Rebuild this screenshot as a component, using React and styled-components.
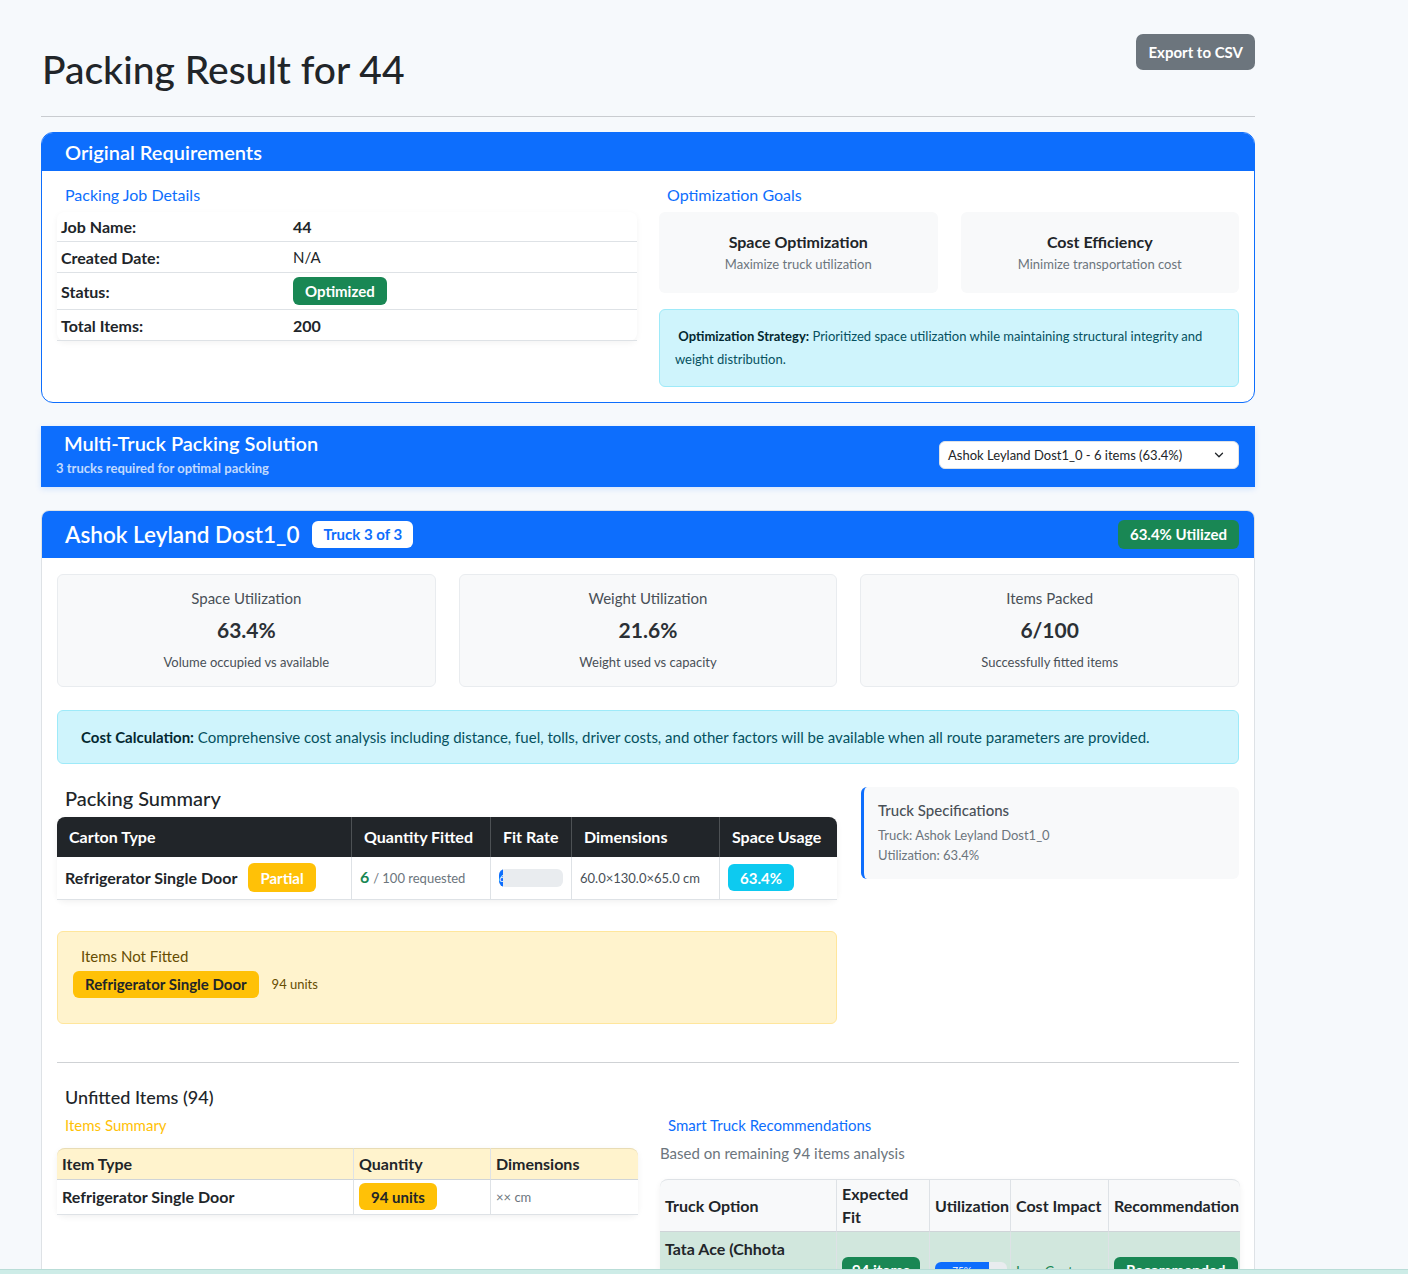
import styled, { createGlobalStyle } from "styled-components";
import { ChevronDown } from "lucide-react";

const GlobalStyle = createGlobalStyle`
  body {
    margin: 0;
    background: #f6f9fc;
    font-family: Lato, "Noto Sans", sans-serif;
    color: #212529;
  }
  * { box-sizing: border-box; }
`;

const Page = styled.div`
  width: 1214px;
  margin-left: 41px;
  padding-top: 34px;
  padding-bottom: 60px;
`;

const Header = styled.div`
  display: flex;
  justify-content: space-between;
  align-items: flex-start;
  border-bottom: 1px solid #c9ccd0;
  padding-bottom: 23px;
`;

const Title = styled.h1`
  margin: 12px 0 0 1px;
  font-size: 39px;
  font-weight: 500;
  line-height: 1.2;
`;

const ExportButton = styled.button`
  background: #6c757d;
  color: #fff;
  border: none;
  border-radius: 7px;
  height: 36px;
  padding: 0 12px;
  font-family: inherit;
  font-size: 15px;
  font-weight: 700;
`;

const Card = styled.div`
  margin-top: ${(p) => p.$mt || 0}px;
  background: #fff;
  border: 1px solid ${(p) => p.$border || "#dee2e6"};
  border-radius: ${(p) => p.$radius || 8}px;
  overflow: hidden;
`;

const CardHeader = styled.div`
  background: #0d6efd;
  color: #fff;
  padding: 0 15px 0 23px;
  height: ${(p) => p.$h}px;
  display: flex;
  align-items: center;
  justify-content: space-between;
`;

const HeaderTitle = styled.div`
  font-size: ${(p) => p.$size || 20}px;
  font-weight: 600;
`;

const CardBody = styled.div`
  padding: 15px;
`;

const TwoCols = styled.div`
  display: grid;
  grid-template-columns: 1fr 1fr;
  column-gap: 22px;
`;

const SectionLabel = styled.div`
  color: ${(p) => p.$color || "#0d6efd"};
  font-size: ${(p) => p.$size || 15}px;
  padding-left: 8px;
  margin: ${(p) => p.$m || "0"};
  line-height: 18px;
`;

const DetailTable = styled.table`
  width: 100%;
  border-collapse: collapse;
  font-size: 15px;
  border-radius: 8px;
  box-shadow: 0 2px 6px rgba(0, 0, 0, 0.05);
  td {
    padding: 0 4px;
    border-bottom: 1px solid #dee2e6;
  }
  td:first-child {
    width: 232px;
    font-weight: 700;
    font-size: 16px;
  }
`;

const DetailRow = styled.tr`
  height: ${(p) => p.$h}px;
`;

const Value = styled.span`
  font-weight: ${(p) => (p.$bold ? 700 : 400)};
  font-size: ${(p) => (p.$bold ? 16 : 15)}px;
`;

const Badge = styled.span`
  display: inline-flex;
  align-items: center;
  height: ${(p) => p.$h || 27}px;
  padding: 0 ${(p) => p.$px || 12}px;
  background: ${(p) => p.$bg};
  color: ${(p) => p.$fg || "#fff"};
  font-size: 15px;
  font-weight: 700;
  border-radius: 6px;
  white-space: nowrap;
`;

const GoalGrid = styled.div`
  display: grid;
  grid-template-columns: 1fr 1fr;
  gap: 23px;
  margin-top: 8px;
`;

const GoalBox = styled.div`
  background: #f8f9fa;
  border-radius: 6px;
  height: 81px;
  display: flex;
  flex-direction: column;
  align-items: center;
  justify-content: center;
  gap: 5px;
`;

const GoalTitle = styled.div`
  font-size: 16px;
  font-weight: 700;
`;

const GoalText = styled.div`
  font-size: 13px;
  color: #6c757d;
`;

const InfoAlert = styled.div`
  margin-top: ${(p) => p.$mt || 0}px;
  background: #cff4fc;
  border: 1px solid #9eeaf9;
  color: #055160;
  border-radius: 6px;
  padding: ${(p) => p.$pad};
  font-size: ${(p) => p.$size}px;
  line-height: ${(p) => p.$lh}px;
  strong {
    color: #032830;
  }
`;

const SolutionBar = styled.div`
  margin-top: 23px;
  background: #0d6efd;
  height: 61px;
  display: flex;
  align-items: center;
  justify-content: space-between;
  padding: 0 16px 0 15px;
  box-shadow: 0 2px 6px rgba(13, 110, 253, 0.15);
`;

const SolutionText = styled.div`
  color: #fff;
  display: flex;
  flex-direction: column;
  gap: 4px;
  align-self: flex-start;
  padding-top: 5px;
`;

const SolutionTitle = styled.div`
  font-size: 20px;
  font-weight: 600;
  line-height: 24px;
  padding-left: 8px;
`;

const SolutionSub = styled.div`
  font-size: 13px;
  font-weight: 700;
  line-height: 18px;
  color: rgba(255, 255, 255, 0.75);
`;

const SelectBox = styled.div`
  width: 300px;
  height: 28px;
  margin-top: -2px;
  background: #fff;
  border: 1px solid #dee2e6;
  border-radius: 6px;
  display: flex;
  align-items: center;
  justify-content: space-between;
  padding: 0 12px 0 8px;
  font-size: 13px;
  color: #212529;
`;

const TruckTitleRow = styled.div`
  display: flex;
  align-items: center;
  gap: 13px;
`;

const StatGrid = styled.div`
  display: grid;
  grid-template-columns: repeat(3, 1fr);
  gap: 23px;
  margin-top: 1px;
`;

const StatBox = styled.div`
  background: #f8f9fa;
  border: 1px solid #e9ecef;
  border-radius: 6px;
  height: 113px;
  padding-top: 13px;
  display: flex;
  flex-direction: column;
  align-items: center;
`;

const StatLabel = styled.div`
  font-size: 15px;
  line-height: 20px;
  color: #495057;
`;

const StatValue = styled.div`
  font-size: 21px;
  line-height: 26px;
  font-weight: 700;
  color: #2b3035;
  margin: 9px 0 10px;
`;

const StatSub = styled.div`
  font-size: 13px;
  line-height: 18px;
  color: #495057;
`;

const SummaryGrid = styled.div`
  display: grid;
  grid-template-columns: 780px 1fr;
  column-gap: 24px;
  margin-top: 23px;
`;

const SubHeading = styled.div`
  font-size: ${(p) => p.$size || 20}px;
  font-weight: 500;
  padding-left: 8px;
  line-height: 22px;
  margin-bottom: ${(p) => p.$mb || 0}px;
`;

const DataTable = styled.table`
  width: 100%;
  table-layout: fixed;
  border-collapse: separate;
  border-spacing: 0;
  font-size: 15px;
  box-shadow: 0 2px 6px rgba(0, 0, 0, 0.06);
  border-radius: 8px;
  th {
    text-align: left;
    font-weight: 700;
    font-size: 16px;
  }
`;

const DarkHead = styled.tr`
  background: #212529;
  color: #fff;
  height: 40px;
  th {
    padding: 0 12px;
    border-left: 1px solid #4d5154;
  }
  th:first-child {
    border-left: none;
    border-top-left-radius: 8px;
  }
  th:last-child {
    border-top-right-radius: 8px;
  }
`;

const BodyRow = styled.tr`
  height: ${(p) => p.$h}px;
  background: ${(p) => p.$bg || "#fff"};
  td {
    padding: 0 ${(p) => p.$px || 8}px;
    border-bottom: 1px solid #dee2e6;
    border-left: 1px solid #dee2e6;
  }
  td:first-child {
    border-left: none;
  }
`;

const CellFlex = styled.div`
  display: flex;
  align-items: center;
  gap: 11px;
  font-weight: 700;
  font-size: 16px;
`;

const Muted = styled.span`
  font-size: ${(p) => p.$size || 13}px;
  line-height: 20px;
  color: ${(p) => p.$color || "#6c757d"};
`;

const Green = styled.span`
  color: #198754;
  font-weight: ${(p) => (p.$light ? 400 : 700)};
  font-size: ${(p) => (p.$light ? 14 : 16)}px;
`;

const Progress = styled.div`
  width: ${(p) => p.$w}px;
  height: ${(p) => p.$h}px;
  background: #e9ecef;
  border-radius: 6px;
  overflow: hidden;
`;

const ProgressFill = styled.div`
  height: 100%;
  background: #0d6efd;
  color: #fff;
  font-size: 10px;
  line-height: ${(p) => p.$h}px;
  text-align: center;
  overflow: hidden;
`;

const SpecBox = styled.div`
  background: #f8f9fa;
  border-left: 3px solid #0d6efd;
  border-radius: 6px;
  height: 92px;
  padding: 14px 14px;
  align-self: start;
`;

const SpecTitle = styled.div`
  font-size: 15px;
  font-weight: 500;
  color: #495057;
  margin-bottom: 6px;
`;

const SpecLine = styled.div`
  font-size: 13px;
  color: #6c757d;
  line-height: 20px;
`;

const WarnBox = styled.div`
  width: 780px;
  margin-top: 31px;
  background: #fff3cd;
  border: 1px solid #ffe69c;
  border-radius: 6px;
  height: 93px;
  padding: 15px 15px;
`;

const WarnTitle = styled.div`
  font-size: 15px;
  color: #664d03;
  padding-left: 8px;
  margin-bottom: 6px;
`;

const WarnRow = styled.div`
  display: flex;
  align-items: center;
  gap: 13px;
`;

const Divider = styled.hr`
  border: none;
  border-top: 1px solid #cfd2d5;
  margin: 38px 0 23px;
`;

const RecNote = styled.div`
  font-size: 15px;
  line-height: 20px;
  color: #6c757d;
  margin-bottom: 16px;
`;

const LightTable = styled.table`
  width: 100%;
  table-layout: fixed;
  border-collapse: separate;
  border-spacing: 0;
  font-size: 15px;
  border-radius: 8px;
  box-shadow: 0 2px 6px rgba(0, 0, 0, 0.06);
  th {
    text-align: left;
    font-weight: 700;
    font-size: 16px;
    padding: 0 5px;
    line-height: 23px;
    border-bottom: 1px solid #cfd4d8;
    border-left: 1px solid #dee2e6;
  }
  th:first-child {
    border-left: none;
    border-top-left-radius: 8px;
  }
  th:last-child {
    border-top-right-radius: 8px;
  }
`;

const LightHead = styled.tr`
  background: ${(p) => p.$bg};
  height: ${(p) => p.$h}px;
  th {
    border-top: 1px solid ${(p) => p.$line};
  }
`;

const BoldCell = styled.td`
  font-weight: 700;
  font-size: 16px;
  line-height: 27px;
  vertical-align: ${(p) => (p.$top ? "top" : "middle")};
  padding-top: ${(p) => (p.$top ? 3 : 0)}px !important;
`;

const BottomStrip = styled.div`
  position: fixed;
  left: 0;
  right: 0;
  bottom: 0;
  height: 5px;
  background: #cdece7;
  border-top: 1px solid #b9ddd7;
`;

function App() {
  return (
    <>
      <GlobalStyle />
      <Page>
        <Header>
          <Title>Packing Result for 44</Title>
          <ExportButton>Export to CSV</ExportButton>
        </Header>

        {/* Original requirements */}
        <Card $mt={15} $border="#0d6efd" $radius={12}>
          <CardHeader $h={38}>
            <HeaderTitle>Original Requirements</HeaderTitle>
          </CardHeader>
          <CardBody>
            <TwoCols>
              <div>
                <SectionLabel $size={16} $m="0 0 8px">Packing Job Details</SectionLabel>
                <DetailTable>
                  <tbody>
                    <DetailRow $h={30}>
                      <td>Job Name:</td>
                      <td><Value $bold>44</Value></td>
                    </DetailRow>
                    <DetailRow $h={31}>
                      <td>Created Date:</td>
                      <td><Value>N/A</Value></td>
                    </DetailRow>
                    <DetailRow $h={37}>
                      <td>Status:</td>
                      <td><Badge $bg="#198754" $h={28}>Optimized</Badge></td>
                    </DetailRow>
                    <DetailRow $h={31}>
                      <td>Total Items:</td>
                      <td><Value $bold>200</Value></td>
                    </DetailRow>
                  </tbody>
                </DetailTable>
              </div>
              <div>
                <SectionLabel $size={16}>Optimization Goals</SectionLabel>
                <GoalGrid>
                  <GoalBox>
                    <GoalTitle>Space Optimization</GoalTitle>
                    <GoalText>Maximize truck utilization</GoalText>
                  </GoalBox>
                  <GoalBox>
                    <GoalTitle>Cost Efficiency</GoalTitle>
                    <GoalText>Minimize transportation cost</GoalText>
                  </GoalBox>
                </GoalGrid>
                <InfoAlert $mt={16} $pad="15px 15px" $size={13} $lh={23}>
                  &nbsp;<strong>Optimization Strategy:</strong> Prioritized space utilization while
                  maintaining structural integrity and weight distribution.
                </InfoAlert>
              </div>
            </TwoCols>
          </CardBody>
        </Card>

        {/* Multi truck bar */}
        <SolutionBar>
          <SolutionText>
            <SolutionTitle>Multi-Truck Packing Solution</SolutionTitle>
            <SolutionSub>3 trucks required for optimal packing</SolutionSub>
          </SolutionText>
          <SelectBox>
            <span>Ashok Leyland Dost1_0 - 6 items (63.4%)</span>
            <ChevronDown size={14} strokeWidth={2.2} />
          </SelectBox>
        </SolutionBar>

        {/* Truck detail */}
        <Card $mt={23}>
          <CardHeader $h={47}>
            <TruckTitleRow>
              <HeaderTitle $size={22.5}>Ashok Leyland Dost1_0</HeaderTitle>
              <Badge $bg="#fff" $fg="#0d6efd" $px={11}>Truck 3 of 3</Badge>
            </TruckTitleRow>
            <Badge $bg="#198754" $h={29}>63.4% Utilized</Badge>
          </CardHeader>
          <CardBody>
            <StatGrid>
              <StatBox>
                <StatLabel>Space Utilization</StatLabel>
                <StatValue>63.4%</StatValue>
                <StatSub>Volume occupied vs available</StatSub>
              </StatBox>
              <StatBox>
                <StatLabel>Weight Utilization</StatLabel>
                <StatValue>21.6%</StatValue>
                <StatSub>Weight used vs capacity</StatSub>
              </StatBox>
              <StatBox>
                <StatLabel>Items Packed</StatLabel>
                <StatValue>6/100</StatValue>
                <StatSub>Successfully fitted items</StatSub>
              </StatBox>
            </StatGrid>

            <InfoAlert $mt={23} $pad="14px 23px" $size={15} $lh={24}>
              <strong>Cost Calculation:</strong> Comprehensive cost analysis including distance, fuel,
              tolls, driver costs, and other factors will be available when all route parameters are
              provided.
            </InfoAlert>

            <SummaryGrid>
              <div>
                <SubHeading $mb={8}>Packing Summary</SubHeading>
                <DataTable>
                  <thead>
                    <DarkHead>
                      <th style={{ width: 294 }}>Carton Type</th>
                      <th style={{ width: 139 }}>Quantity Fitted</th>
                      <th style={{ width: 81 }}>Fit Rate</th>
                      <th style={{ width: 148 }}>Dimensions</th>
                      <th style={{ width: 118 }}>Space Usage</th>
                    </DarkHead>
                  </thead>
                  <tbody>
                    <BodyRow $h={43}>
                      <td>
                        <CellFlex>
                          Refrigerator Single Door
                          <Badge $bg="#ffc107" $h={29}>Partial</Badge>
                        </CellFlex>
                      </td>
                      <td>
                        <Green>6</Green> <Muted>/ 100 requested</Muted>
                      </td>
                      <td>
                        <Progress $w={64} $h={18}>
                          <ProgressFill $h={18} style={{ width: "6%" }}>6</ProgressFill>
                        </Progress>
                      </td>
                      <td>
                        <Muted $color="#495057">60.0×130.0×65.0 cm</Muted>
                      </td>
                      <td>
                        <Badge $bg="#0dcaf0">63.4%</Badge>
                      </td>
                    </BodyRow>
                  </tbody>
                </DataTable>
              </div>
              <SpecBox>
                <SpecTitle>Truck Specifications</SpecTitle>
                <SpecLine>Truck: Ashok Leyland Dost1_0</SpecLine>
                <SpecLine>Utilization: 63.4%</SpecLine>
              </SpecBox>
            </SummaryGrid>

            <WarnBox>
              <WarnTitle>Items Not Fitted</WarnTitle>
              <WarnRow>
                <Badge $bg="#ffc107" $fg="#212529">Refrigerator Single Door</Badge>
                <Muted $color="#664d03">94 units</Muted>
              </WarnRow>
            </WarnBox>

            <Divider />

            <SubHeading $size={18} $mb={8}>Unfitted Items (94)</SubHeading>
            <TwoCols>
              <div>
                <SectionLabel $color="#ffc107" $m="0 0 14px">Items Summary</SectionLabel>
                <LightTable>
                  <thead>
                    <LightHead $bg="#fff3cd" $h={32} $line="#e8dcb5">
                      <th style={{ width: 296 }}>Item Type</th>
                      <th style={{ width: 137 }}>Quantity</th>
                      <th style={{ width: 148 }}>Dimensions</th>
                    </LightHead>
                  </thead>
                  <tbody>
                    <BodyRow $h={35} $px={5}>
                      <BoldCell>Refrigerator Single Door</BoldCell>
                      <td><Badge $bg="#ffc107" $fg="#212529">94 units</Badge></td>
                      <td><Muted>×× cm</Muted></td>
                    </BodyRow>
                  </tbody>
                </LightTable>
              </div>
              <div>
                <SectionLabel $m="0 0 9px">Smart Truck Recommendations</SectionLabel>
                <RecNote>Based on remaining 94 items analysis</RecNote>
                <LightTable>
                  <thead>
                    <LightHead $bg="#f8f9fa" $h={53} $line="#dee2e6">
                      <th style={{ width: 176 }}>Truck Option</th>
                      <th style={{ width: 93 }}>Expected Fit</th>
                      <th style={{ width: 81 }}>Utilization</th>
                      <th style={{ width: 98 }}>Cost Impact</th>
                      <th style={{ width: 132 }}>Recommendation</th>
                    </LightHead>
                  </thead>
                  <tbody>
                    <BodyRow $h={78} $px={5} $bg="#d1e7dd">
                      <BoldCell $top>Tata Ace (Chhota Hathi)</BoldCell>
                      <td><Badge $bg="#198754" $px={10}>94 items</Badge></td>
                      <td>
                        <Progress $w={72} $h={16}>
                          <ProgressFill $h={16} style={{ width: "75%" }}>75%</ProgressFill>
                        </Progress>
                      </td>
                      <td><Green $light>Low Cost</Green></td>
                      <td><Badge $bg="#198754">Recommended</Badge></td>
                    </BodyRow>
                  </tbody>
                </LightTable>
              </div>
            </TwoCols>
          </CardBody>
        </Card>
      </Page>
      <BottomStrip />
    </>
  );
}

export default App;
